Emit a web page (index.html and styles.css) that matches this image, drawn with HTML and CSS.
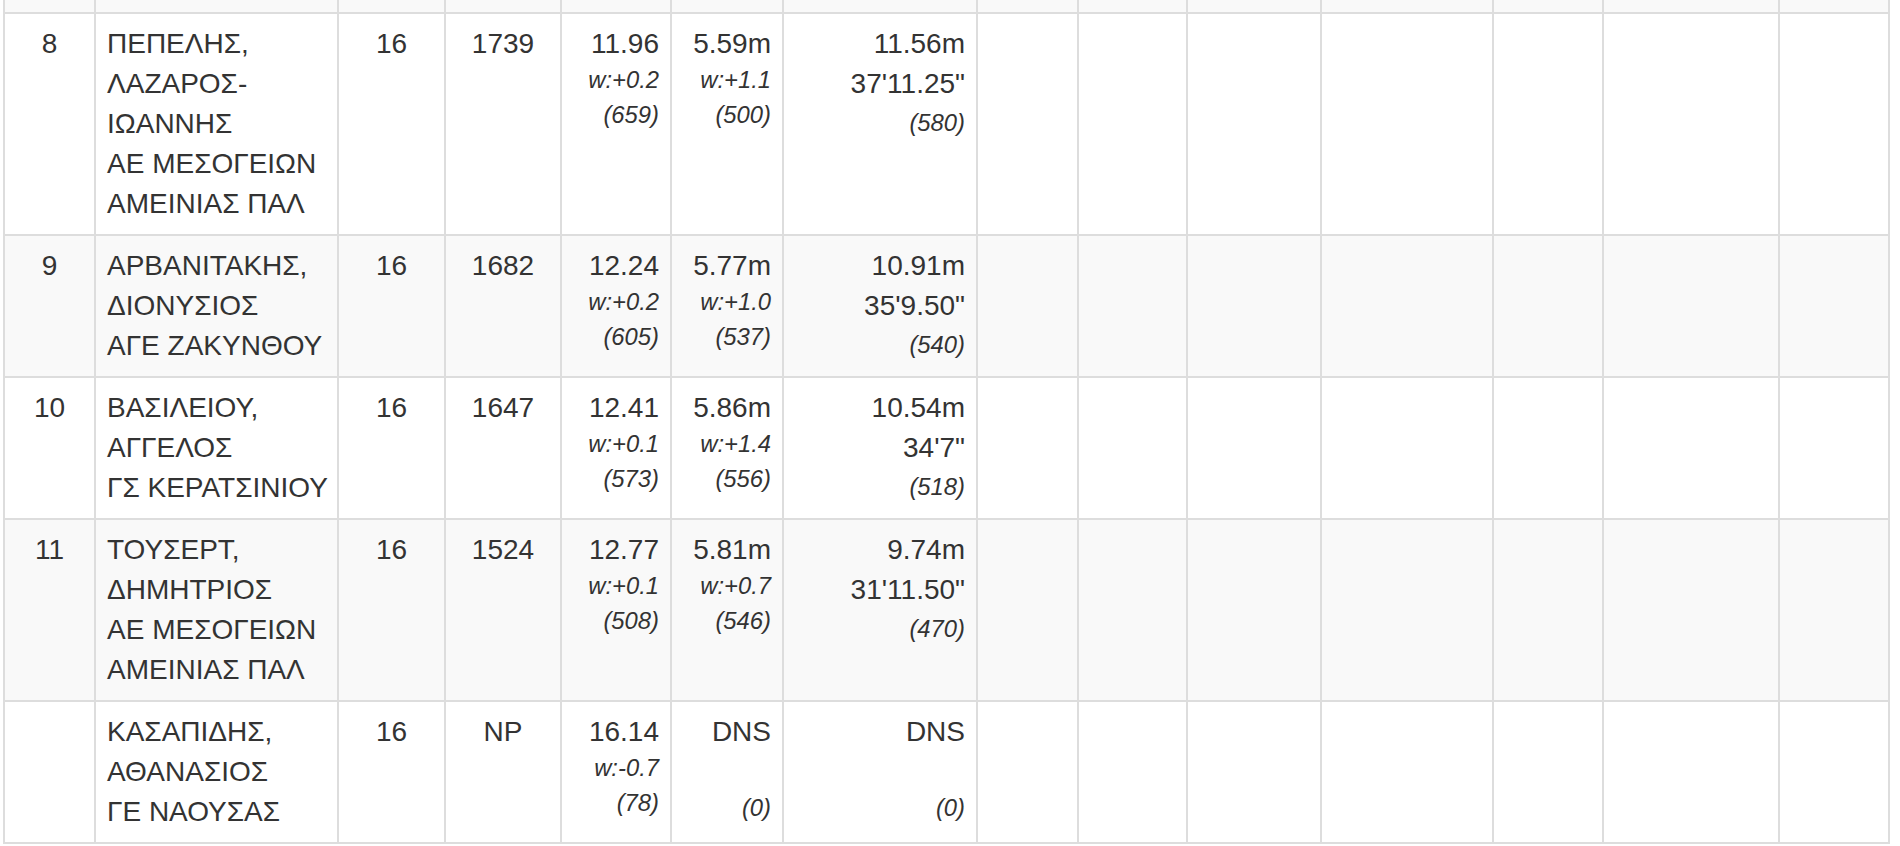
FILE: index.html
```html
<!DOCTYPE html>
<html lang="el">
<head>
<meta charset="utf-8">
<title>Αποτελέσματα</title>
<link rel="stylesheet" href="styles.css">
</head>
<body>
<div class="page">
<table class="results">
<tbody>
<tr class="stripe partial">
<td class="c1"></td><td class="c2"></td><td class="c3"></td><td class="c4"></td><td class="c5"></td><td class="c6"></td><td class="c7"></td><td class="c8"></td><td class="c9"></td><td class="c10"></td><td class="c11"></td><td class="c12"></td><td class="c13"></td><td class="c14"></td>
</tr>
<tr>
<td class="ctr">8</td>
<td class="name"><div>ΠΕΠΕΛΗΣ, ΛΑΖΑΡΟΣ-ΙΩΑΝΝΗΣ</div><div class="club">ΑΕ ΜΕΣΟΓΕΙΩΝ</div><div class="club">ΑΜΕΙΝΙΑΣ ΠΑΛ</div></td>
<td class="ctr">16</td>
<td class="ctr">1739</td>
<td class="num"><div class="main">11.96</div><div class="sm w">w:+0.2</div><div class="sm p">(659)</div></td>
<td class="num"><div class="main">5.59m</div><div class="sm w">w:+1.1</div><div class="sm p">(500)</div></td>
<td class="num"><div class="main">11.56m</div><div class="main">37'11.25"</div><div class="sm p">(580)</div></td>
<td></td><td></td><td></td><td></td><td></td><td></td><td></td>
</tr>
<tr class="stripe">
<td class="ctr">9</td>
<td class="name"><div>ΑΡΒΑΝΙΤΑΚΗΣ, ΔΙΟΝΥΣΙΟΣ</div><div class="club">ΑΓΕ ΖΑΚΥΝΘΟΥ</div></td>
<td class="ctr">16</td>
<td class="ctr">1682</td>
<td class="num"><div class="main">12.24</div><div class="sm w">w:+0.2</div><div class="sm p">(605)</div></td>
<td class="num"><div class="main">5.77m</div><div class="sm w">w:+1.0</div><div class="sm p">(537)</div></td>
<td class="num"><div class="main">10.91m</div><div class="main">35'9.50"</div><div class="sm p">(540)</div></td>
<td></td><td></td><td></td><td></td><td></td><td></td><td></td>
</tr>
<tr>
<td class="ctr">10</td>
<td class="name"><div>ΒΑΣΙΛΕΙΟΥ, ΑΓΓΕΛΟΣ</div><div class="club">ΓΣ ΚΕΡΑΤΣΙΝΙΟΥ</div></td>
<td class="ctr">16</td>
<td class="ctr">1647</td>
<td class="num"><div class="main">12.41</div><div class="sm w">w:+0.1</div><div class="sm p">(573)</div></td>
<td class="num"><div class="main">5.86m</div><div class="sm w">w:+1.4</div><div class="sm p">(556)</div></td>
<td class="num"><div class="main">10.54m</div><div class="main">34'7"</div><div class="sm p">(518)</div></td>
<td></td><td></td><td></td><td></td><td></td><td></td><td></td>
</tr>
<tr class="stripe">
<td class="ctr">11</td>
<td class="name"><div>ΤΟΥΣΕΡΤ, ΔΗΜΗΤΡΙΟΣ</div><div class="club">ΑΕ ΜΕΣΟΓΕΙΩΝ</div><div class="club">ΑΜΕΙΝΙΑΣ ΠΑΛ</div></td>
<td class="ctr">16</td>
<td class="ctr">1524</td>
<td class="num"><div class="main">12.77</div><div class="sm w">w:+0.1</div><div class="sm p">(508)</div></td>
<td class="num"><div class="main">5.81m</div><div class="sm w">w:+0.7</div><div class="sm p">(546)</div></td>
<td class="num"><div class="main">9.74m</div><div class="main">31'11.50"</div><div class="sm p">(470)</div></td>
<td></td><td></td><td></td><td></td><td></td><td></td><td></td>
</tr>
<tr>
<td class="ctr"></td>
<td class="name"><div>ΚΑΣΑΠΙΔΗΣ, ΑΘΑΝΑΣΙΟΣ</div><div class="club">ΓΕ ΝΑΟΥΣΑΣ</div></td>
<td class="ctr">16</td>
<td class="ctr">NP</td>
<td class="num"><div class="main">16.14</div><div class="sm w">w:-0.7</div><div class="sm p">(78)</div></td>
<td class="num"><div class="main">DNS</div><div class="sm empty"></div><div class="sm p">(0)</div></td>
<td class="num"><div class="main">DNS</div><div class="sm empty"></div><div class="sm p">(0)</div></td>
<td></td><td></td><td></td><td></td><td></td><td></td><td></td>
</tr>
</tbody>
</table>
</div>
</body>
</html>
```
FILE: styles.css
```css
html, body {
  margin: 0;
  padding: 0;
  background: #ffffff;
}

.page {
  padding-left: 3px;
}

.results {
  border-collapse: separate;
  border-spacing: 0;
  table-layout: fixed;
  width: 1887px;
  font-family: "Liberation Sans", Arial, Helvetica, sans-serif;
  font-size: 28px;
  line-height: 40px;
  color: #333333;
}

.results td {
  box-sizing: border-box;
  padding: 10px 10px;
  vertical-align: top;
  border-right: 2px solid #dddddd;
  border-bottom: 2px solid #dddddd;
}

.results td:first-child {
  border-left: 2px solid #dddddd;
}

.results tr.stripe td {
  background: #f9f9f9;
}

.results tr.partial td {
  height: 14px;
  padding: 0;
}

.c1 { width: 93px; }
.c2 { width: 243px; }
.c3 { width: 107px; }
.c4 { width: 116px; }
.c5 { width: 110px; }
.c6 { width: 112px; }
.c7 { width: 194px; }
.c8 { width: 101px; }
.c9 { width: 109px; }
.c10 { width: 134px; }
.c11 { width: 172px; }
.c12 { width: 110px; }
.c13 { width: 176px; }
.c14 { width: 110px; }

.results td.ctr {
  text-align: center;
}

.results td.name {
  padding-left: 11px;
}

.club {
  white-space: nowrap;
}

.results td.num {
  text-align: right;
  padding-right: 11px;
}

.main {
  line-height: 40px;
  white-space: nowrap;
}

.sm {
  font-size: 23.8px;
  font-style: italic;
  white-space: nowrap;
}

.sm.w {
  line-height: 32px;
}

.sm.p {
  line-height: 38px;
}

.sm.empty {
  height: 37px;
}
```
